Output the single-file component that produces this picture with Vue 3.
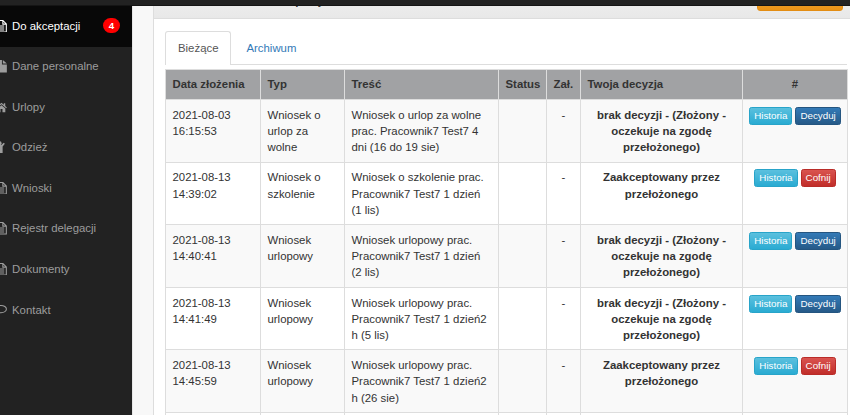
<template>
  <div class="page">
    <div class="topbar"></div>
    <div class="wrapper">
      <nav class="sidebar">
        <a v-for="item in menu" :key="item.label" href="#" :class="{ active: item.active }">
          <svg v-if="item.icon === 'text'" class="icon" viewBox="0 0 12 14">
            <path d="M.6.6h7l3.8 3.8v9H.6zM7.5.6v4h4M3 6.7h6M3 8.9h6M3 11.1h6" fill="none" stroke="currentColor" stroke-width="1.2" />
          </svg>
          <svg v-else-if="item.icon === 'file'" class="icon" viewBox="0 0 12 14">
            <path d="M0 0h6.5v5H12v9H0zM7.5 0 12 4H7.5z" fill="currentColor" />
          </svg>
          <svg v-else-if="item.icon === 'home'" class="icon" viewBox="0 0 12 14">
            <path d="M6 2 0 7.3l.8.9L6 3.7l5.200 4.500.8-.9-1.800-1.600V2.500H8.600v1.800zM6 4.800 1.700 8.500V12.500h3.200V9h2.200v3.500h3.200V8.500z" fill="currentColor" />
          </svg>
          <svg v-else-if="item.icon === 'person'" class="icon person" viewBox="0 0 12 14">
            <circle cx="6" cy="2.600" r="2.300" fill="currentColor" />
            <path d="M1.300 2 4 4.500h4L10.700 2 12 3.200 9.500 6.200V13.500H6.500v-3.500h-1v3.500h-3V6.200L0 3.200z" fill="currentColor" />
          </svg>
          <svg v-else class="icon comment" viewBox="0 0 14 14">
            <path d="M7 2.5c3.5 0 6.3 1.9 6.3 4.3S10.5 11 7 11c-.6 0-1.2 0-1.7-.1-1.2 1-2.5 1.4-3.6 1.5.6-.6 1-1.4 1.1-2.3C1.5 9.3.7 8.1.7 6.8.7 4.4 3.5 2.5 7 2.5z" fill="none" stroke="currentColor" stroke-width="1.2" />
          </svg>
          <span>{{ item.label }}</span>
          <span v-if="item.count" class="count">{{ item.count }}</span>
        </a>
      </nav>

      <main class="panel">
        <div class="panel-heading">
          <strong>Wnioski do akceptacji</strong>
          <button class="btn-warning">Wypisane</button>
        </div>
        <div class="panel-body">
          <ul class="tabs">
            <li class="active"><a href="#">Bieżące</a></li>
            <li><a href="#">Archiwum</a></li>
          </ul>
          <table>
            <colgroup>
              <col v-for="(width, i) in widths" :key="i" :style="{ width: width + 'px' }">
            </colgroup>
            <thead>
              <tr>
                <th>Data złożenia</th>
                <th>Typ</th>
                <th>Treść</th>
                <th>Status</th>
                <th>Zał.</th>
                <th>Twoja decyzja</th>
                <th class="center">#</th>
              </tr>
            </thead>
            <tbody>
              <tr v-for="row in rows" :key="row.time">
                <td>{{ row.date }}<br>{{ row.time }}</td>
                <td class="lines">{{ row.type }}</td>
                <td class="lines">{{ row.text }}</td>
                <td></td>
                <td class="center">-</td>
                <td class="center lines decision">{{ row.accepted ? accepted : pending }}</td>
                <td class="actions">
                  <div class="buttons">
                    <button class="btn btn-info">Historia</button>
                    <button v-if="row.accepted" class="btn btn-danger">Cofnij</button>
                    <button v-else class="btn btn-primary">Decyduj</button>
                  </div>
                </td>
              </tr>
              <tr><td v-for="n in 7" :key="n"></td></tr>
            </tbody>
          </table>
        </div>
      </main>
    </div>
  </div>
</template>

<script setup>
const menu = [
  { label: 'Do akceptacji', icon: 'text', active: true, count: 4 },
  { label: 'Dane personalne', icon: 'file' },
  { label: 'Urlopy', icon: 'home' },
  { label: 'Odzież', icon: 'person' },
  { label: 'Wnioski', icon: 'text' },
  { label: 'Rejestr delegacji', icon: 'text' },
  { label: 'Dokumenty', icon: 'text' },
  { label: 'Kontakt', icon: 'comment' }
]

const widths = [95, 84, 154, 48, 34, 162, 105]

const pending = 'brak decyzji - (Złożony -\noczekuje na zgodę\nprzełożonego)'
const accepted = 'Zaakceptowany przez\nprzełożonego'

const rows = [
  {
    date: '2021-08-03',
    time: '16:15:53',
    type: 'Wniosek o\nurlop za\nwolne',
    text: 'Wniosek o urlop za wolne\nprac. Pracownik7 Test7 4\ndni (16 do 19 sie)'
  },
  {
    date: '2021-08-13',
    time: '14:39:02',
    type: 'Wniosek o\nszkolenie',
    text: 'Wniosek o szkolenie prac.\nPracownik7 Test7 1 dzień\n(1 lis)',
    accepted: true
  },
  {
    date: '2021-08-13',
    time: '14:40:41',
    type: 'Wniosek\nurlopowy',
    text: 'Wniosek urlopowy prac.\nPracownik7 Test7 1 dzień\n(2 lis)'
  },
  {
    date: '2021-08-13',
    time: '14:41:49',
    type: 'Wniosek\nurlopowy',
    text: 'Wniosek urlopowy prac.\nPracownik7 Test7 1 dzień2\nh (5 lis)'
  },
  {
    date: '2021-08-13',
    time: '14:45:59',
    type: 'Wniosek\nurlopowy',
    text: 'Wniosek urlopowy prac.\nPracownik7 Test7 1 dzień2\nh (26 sie)',
    accepted: true
  }
]
</script>

<style>
body {
  background: #222;
  overflow: hidden;
}
</style>

<style scoped>
.page {
  height: 415px;
  overflow: hidden;
  font: 11.38px/16.2px "Liberation Sans", Arial, sans-serif;
  color: #333;
}

.page * {
  box-sizing: border-box;
}

.topbar {
  position: relative;
  z-index: 1;
  height: 6px;
  background: #222;
  border-bottom: 1px solid #151515;
}

.wrapper {
  display: flex;
  height: 409px;
}

.sidebar {
  width: 132px;
  flex: none;
  background: #222;
}

.sidebar a {
  display: flex;
  align-items: center;
  height: 40.55px;
  padding-bottom: 1px;
  color: #9d9d9d;
  text-decoration: none;
  white-space: nowrap;
}

.sidebar a.active {
  background: #080808;
  color: #fff;
}

.icon {
  width: 11px;
  height: 12.5px;
  margin-left: -4px;
  margin-right: 5px;
  flex: none;
}

.icon.person {
  margin-left: -6px;
  margin-right: 7px;
}

.icon.comment {
  width: 12px;
  margin-left: -5px;
}

.count {
  width: 17px;
  height: 15px;
  margin-left: auto;
  margin-right: 12px;
  border-radius: 8px;
  background: #f00;
  color: #fff;
  font-size: 9.72px;
  font-weight: bold;
  line-height: 15px;
  text-align: center;
}

.panel {
  flex: 1;
  min-width: 0;
  padding-left: 20px;
  background: linear-gradient(to right, #f8f8f8 20px, #ddd 20px, #ddd 21px, #fff 21px);
  border-left: 1px solid #e7e7e7;
}

.panel-heading {
  display: flex;
  justify-content: space-between;
  height: 13px;
  margin-left: 1px;
  padding: 0 7px 0 52px;
  background: linear-gradient(#ececec, #e8e8e8);
  border-bottom: 1px solid #ddd;
}

.panel-heading strong {
  margin-top: -13px;
}

.btn-warning {
  width: 86px;
  height: 24px;
  margin-top: -19px;
  padding: 2px 0 0;
  border: 1px solid #e38d13;
  border-radius: 3px;
  background: linear-gradient(#f0ad4e, #eb9316);
  color: #fff;
  font: 11.34px/16px "Liberation Sans", Arial, sans-serif;
}

.panel-body {
  padding: 12px 3px 0 12px;
}

.tabs {
  display: flex;
  height: 34px;
  margin: 0 0 4px;
  padding: 0;
  list-style: none;
  border-bottom: 1px solid #ddd;
}

.tabs li {
  height: 34px;
  padding: 8px 12px 0;
  border: 1px solid transparent;
  border-bottom: 0;
  border-radius: 3px 3px 0 0;
}

.tabs li.active {
  margin-right: 2px;
  background: #fff;
  border-color: #ddd;
}

.tabs a {
  color: #337ab7;
  text-decoration: none;
}

.tabs .active a {
  color: #555;
}

table {
  width: 682px;
  table-layout: fixed;
  border-collapse: collapse;
}

th,
td {
  padding: 6.8px 6.5px 6px;
  border: 1px solid #ddd;
  text-align: left;
  vertical-align: top;
}

th {
  height: 30px;
  padding-top: 6.4px;
  background: #a1a2a4;
  white-space: nowrap;
}

tbody tr {
  height: 62.6px;
}

tbody tr:nth-child(odd) {
  background: #f9f9f9;
}

.center {
  text-align: center;
}

.lines {
  white-space: pre;
}

.decision {
  font-weight: bold;
}

.actions {
  padding-left: 0;
  padding-right: 0;
}

.buttons {
  display: flex;
  justify-content: center;
  gap: 3px;
}

.btn {
  height: 18px;
  padding: 0 4px;
  border: 1px solid;
  border-radius: 2.5px;
  color: #fff;
  font: 9.8px/14px "Liberation Sans", Arial, sans-serif;
}

.btn-info {
  background: linear-gradient(#5bc0de, #2aabd2);
  border-color: #28a4c9;
}

.btn-danger {
  background: linear-gradient(#d9534f, #c12e2a);
  border-color: #b92c28;
}

.btn-primary {
  background: linear-gradient(#337ab7, #265a88);
  border-color: #245580;
}
</style>
